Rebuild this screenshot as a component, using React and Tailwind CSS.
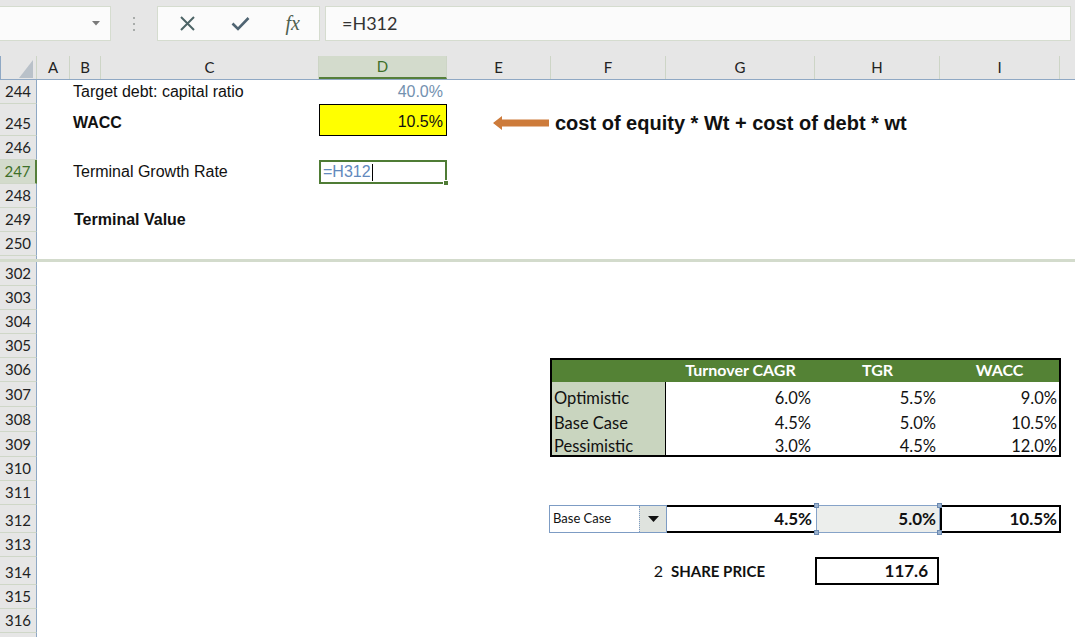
import React from "react";

const ARIAL = "font-['Liberation_Sans',Arial,sans-serif]";
const CAL = "font-['Lato',sans-serif]";

function Row({ h, n, active, children }) {
  return (
    <div className={`flex shrink-0 ${h}`}>
      <div
        className={`w-[37px] shrink-0 flex items-end justify-center pb-[3px] border-b border-b-[#cfd7c8] ${CAL} text-[15px] leading-[18px] ${
          active
            ? "bg-[#d3dbcc] text-[#3e6f28] border-r-2 border-r-[#557f3a]"
            : "bg-[#e6e6e6] text-[#222] border-r border-r-[#8fa8c4]"
        }`}
      >
        {n}
      </div>
      <div className="flex flex-1 min-w-0 bg-white">{children}</div>
    </div>
  );
}

function ColHead({ w, label, active }) {
  return (
    <div
      className={`${w} shrink-0 flex items-center justify-center border-r border-r-[#cdd5c6] ${
        active ? "bg-[#d3dbcc] text-[#3e6f28] border-b-2 border-b-[#557f3a]" : ""
      }`}
    >
      {label}
    </div>
  );
}

function Handle({ pos }) {
  return <div className={`absolute w-[5px] h-[5px] bg-[#9cb3cf] border border-[#6b89b0] ${pos}`} />;
}

export default function App() {
  return (
    <div className="w-[1075px] h-[637px] overflow-hidden bg-white flex flex-col text-[#111]">
      {/* Formula bar */}
      <div className="h-[56px] shrink-0 bg-[#e6e6e6] flex items-start pt-[6px]">
        <div className="w-[111px] h-[35px] bg-[#fbfbfb] border border-l-0 border-[#d5dccf] flex items-center justify-end pr-[10px]">
          <svg width="8" height="5" viewBox="0 0 8 5">
            <polygon points="0,0 8,0 4,4.5" fill="#7a7a7a" />
          </svg>
        </div>
        <div className="w-[46px] h-[35px] flex items-center justify-center">
          <svg width="4" height="16" viewBox="0 0 4 16">
            <rect x="1" y="1" width="2" height="2" fill="#a8acaa" />
            <rect x="1" y="7" width="2" height="2" fill="#a8acaa" />
            <rect x="1" y="13" width="2" height="2" fill="#a8acaa" />
          </svg>
        </div>
        <div className="w-[163px] h-[35px] bg-[#fbfbfb] border border-[#d5dccf] flex items-center pl-[3px]">
          <div className="w-[53px] flex justify-center">
            <svg width="17" height="15" viewBox="0 0 17 15">
              <path d="M2 1 L15 14 M15 1 L2 14" stroke="#4d6466" strokeWidth="2" fill="none" />
            </svg>
          </div>
          <div className="w-[53px] flex justify-center">
            <svg width="19" height="15" viewBox="0 0 19 15">
              <path d="M1.5 7.5 L7 13 L17.5 2" stroke="#4f6472" strokeWidth="2.6" fill="none" />
            </svg>
          </div>
          <div className="w-[53px] flex justify-center">
            <span className="font-['Liberation_Serif',serif] italic text-[20px] leading-none text-[#4e604f] pb-[2px]">
              fx
            </span>
          </div>
        </div>
        <div
          className={`ml-[5px] mr-[4px] flex-1 h-[35px] bg-[#fbfbfb] border border-[#d5dccf] flex items-center pl-[16px] ${CAL} text-[18px] text-[#333]`}
        >
          =H312
        </div>
      </div>

      {/* Column headers */}
      <div className={`h-[24px] shrink-0 flex bg-[#e6e6e6] border-b border-b-[#8fa8c4] ${CAL} text-[15px] text-[#222]`}>
        <div className="w-[37px] shrink-0 border-l border-l-[#8fa8c4] border-r border-r-[#cdd5c6] flex items-end justify-end pr-[3px] pb-[1px]">
          <svg width="14" height="18" viewBox="0 0 14 18">
            <polygon points="0,18 14,18 14,0" fill="#b9c1c9" />
          </svg>
        </div>
        <ColHead w="w-[33px]" label="A" />
        <ColHead w="w-[31px]" label="B" />
        <ColHead w="w-[218px]" label="C" />
        <ColHead w="w-[128px]" label="D" active />
        <ColHead w="w-[104px]" label="E" />
        <ColHead w="w-[115px]" label="F" />
        <ColHead w="w-[149px]" label="G" />
        <ColHead w="w-[125px]" label="H" />
        <ColHead w="w-[120px]" label="I" />
        <div className="flex-1" />
      </div>

      {/* Upper rows */}
      <div className={`flex flex-col ${ARIAL} text-[16px]`}>
        <Row h="h-[24px]" n="244">
          <div className="w-[33px] shrink-0" />
          <div className="w-[249px] shrink-0 pl-[3px] flex items-center whitespace-nowrap">Target debt: capital ratio</div>
          <div className="w-[128px] shrink-0 flex items-center justify-end pr-[4px] text-[#7391b0]">40.0%</div>
        </Row>
        <Row h="h-[32px]" n="245">
          <div className="w-[33px] shrink-0" />
          <div className="w-[249px] shrink-0 pl-[3px] flex items-end pb-[1px] font-bold">WACC</div>
          <div className="w-[128px] shrink-0 bg-[#ffff00] border border-black flex items-end justify-end pr-[3px] pb-[1px]">
            10.5%
          </div>
          <div className="flex-1 flex items-center pt-[6px] whitespace-nowrap">
            <svg className="ml-[46px] shrink-0" width="56" height="14" viewBox="0 0 56 14">
              <polygon points="0,7 9,0 9,3.5 56,3.5 56,10.5 9,10.5 9,14" fill="#cd7b3b" />
            </svg>
            <span className="ml-[6px] font-bold text-[20px] text-[#111]">cost of equity * Wt + cost of debt * wt</span>
          </div>
        </Row>
        <Row h="h-[24px]" n="246" />
        <Row h="h-[24px]" n="247" active>
          <div className="w-[33px] shrink-0" />
          <div className="w-[249px] shrink-0 pl-[3px] flex items-center whitespace-nowrap">Terminal Growth Rate</div>
          <div className="w-[128px] shrink-0 relative border-2 border-[#4f7c35] flex items-center pl-[2px] text-[#6289bd]">
            =H312
            <span className="inline-block w-[1px] h-[17px] bg-black ml-[1px]" />
            <div className="absolute -right-[4px] -bottom-[4px] w-[6px] h-[6px] bg-[#4f7c35] border border-white" />
          </div>
        </Row>
        <Row h="h-[24px]" n="248" />
        <Row h="h-[24px]" n="249">
          <div className="w-[33px] shrink-0" />
          <div className="w-[249px] shrink-0 pl-[4px] flex items-center font-bold whitespace-nowrap">Terminal Value</div>
        </Row>
        <Row h="h-[24px]" n="250" />
        <div className="flex h-[3px] shrink-0">
          <div className="w-[37px] bg-[#e6e6e6] border-r border-r-[#8fa8c4]" />
          <div className="flex-1 bg-white" />
        </div>
        <div className="h-[3px] shrink-0 bg-[#d3dbcc]" />
      </div>

      {/* Lower rows */}
      <div className={`flex flex-col flex-1 ${CAL}`}>
        <Row h="h-[24px]" n="302" />
        <Row h="h-[24px]" n="303" />
        <Row h="h-[24px]" n="304" />
        <Row h="h-[24px]" n="305" />
        <Row h="h-[24px]" n="306">
          <div className="w-[513px] shrink-0" />
          <div className="w-[116px] shrink-0 bg-[#548235] border-t-2 border-l-2 border-black" />
          <div className="w-[149px] shrink-0 bg-[#548235] border-t-2 border-black flex items-end justify-center text-white font-bold text-[16px]">
            Turnover CAGR
          </div>
          <div className="w-[125px] shrink-0 bg-[#548235] border-t-2 border-black flex items-end justify-center text-white font-bold text-[16px]">
            TGR
          </div>
          <div className="w-[121px] shrink-0 bg-[#548235] border-t-2 border-r-2 border-black flex items-end justify-center text-white font-bold text-[16px]">
            WACC
          </div>
        </Row>
        {[
          ["307", "Optimistic", "6.0%", "5.5%", "9.0%", false],
          ["308", "Base Case", "4.5%", "5.0%", "10.5%", false],
          ["309", "Pessimistic", "3.0%", "4.5%", "12.0%", true],
        ].map(([n, label, g, hh, i, last]) => (
          <Row key={n} h="h-[25px]" n={n}>
            <div className="w-[513px] shrink-0" />
            <div
              className={`w-[116px] shrink-0 bg-[#c9d5bf] border-l-2 border-r border-black flex items-end pl-[2px] text-[16.5px] leading-[18px] ${
                last ? "border-b-2" : ""
              }`}
            >
              {label}
            </div>
            <div
              className={`w-[149px] shrink-0 flex items-end justify-end pr-[4px] text-[16.5px] leading-[18px] ${
                last ? "border-b-2 border-black" : ""
              }`}
            >
              {g}
            </div>
            <div
              className={`w-[125px] shrink-0 flex items-end justify-end pr-[4px] text-[16.5px] leading-[18px] ${
                last ? "border-b-2 border-black" : ""
              }`}
            >
              {hh}
            </div>
            <div
              className={`w-[121px] shrink-0 border-r-2 border-black flex items-end justify-end pr-[2px] text-[16.5px] leading-[18px] ${
                last ? "border-b-2" : ""
              }`}
            >
              {i}
            </div>
          </Row>
        ))}
        <Row h="h-[24px]" n="310" />
        <Row h="h-[24px]" n="311" />
        <Row h="h-[28px]" n="312">
          <div className="w-[512px] shrink-0" />
          <div className="w-[118px] shrink-0 border border-[#7d9cc4] flex bg-white">
            <div className="flex-1 flex items-center pl-[3px] text-[13px]">Base Case</div>
            <div className="w-[27px] bg-[#dfe3de] border-l border-dotted border-[#7d9cc4] flex items-center justify-center">
              <svg width="11" height="6" viewBox="0 0 11 6">
                <polygon points="0,0 11,0 5.5,6" fill="#111" />
              </svg>
            </div>
          </div>
          <div className="w-[149px] shrink-0 border-t-2 border-b-2 border-black flex items-center justify-end pr-[4px] font-bold text-[17px]">
            4.5%
          </div>
          <div className="w-[124px] shrink-0 relative bg-[#eceeec] border border-[#86a3c8] flex items-center justify-end pr-[3px] font-bold text-[17px]">
            5.0%
            <Handle pos="-left-[3px] -top-[3px]" />
            <Handle pos="-right-[3px] -top-[3px]" />
            <Handle pos="-left-[3px] -bottom-[3px]" />
            <Handle pos="-right-[3px] -bottom-[3px]" />
          </div>
          <div className="w-[121px] shrink-0 border-2 border-black flex items-center justify-end pr-[2px] font-bold text-[17px]">
            10.5%
          </div>
        </Row>
        <Row h="h-[24px]" n="313" />
        <Row h="h-[28px]" n="314">
          <div className="w-[514px] shrink-0" />
          <div className="w-[115px] shrink-0 flex items-center justify-end pr-[3px] text-[16px]">2</div>
          <div className="w-[149px] shrink-0 flex items-center pl-[5px] font-bold text-[15px] whitespace-nowrap">SHARE PRICE</div>
          <div className="w-[124px] shrink-0 border-2 border-black flex items-center justify-end pr-[9px] font-bold text-[17px]">
            117.6
          </div>
        </Row>
        <Row h="h-[24px]" n="315" />
        <Row h="h-[24px]" n="316" />
        <div className="flex flex-1">
          <div className="w-[37px] bg-[#e6e6e6] border-r border-r-[#8fa8c4]" />
          <div className="flex-1 bg-white" />
        </div>
      </div>
    </div>
  );
}
